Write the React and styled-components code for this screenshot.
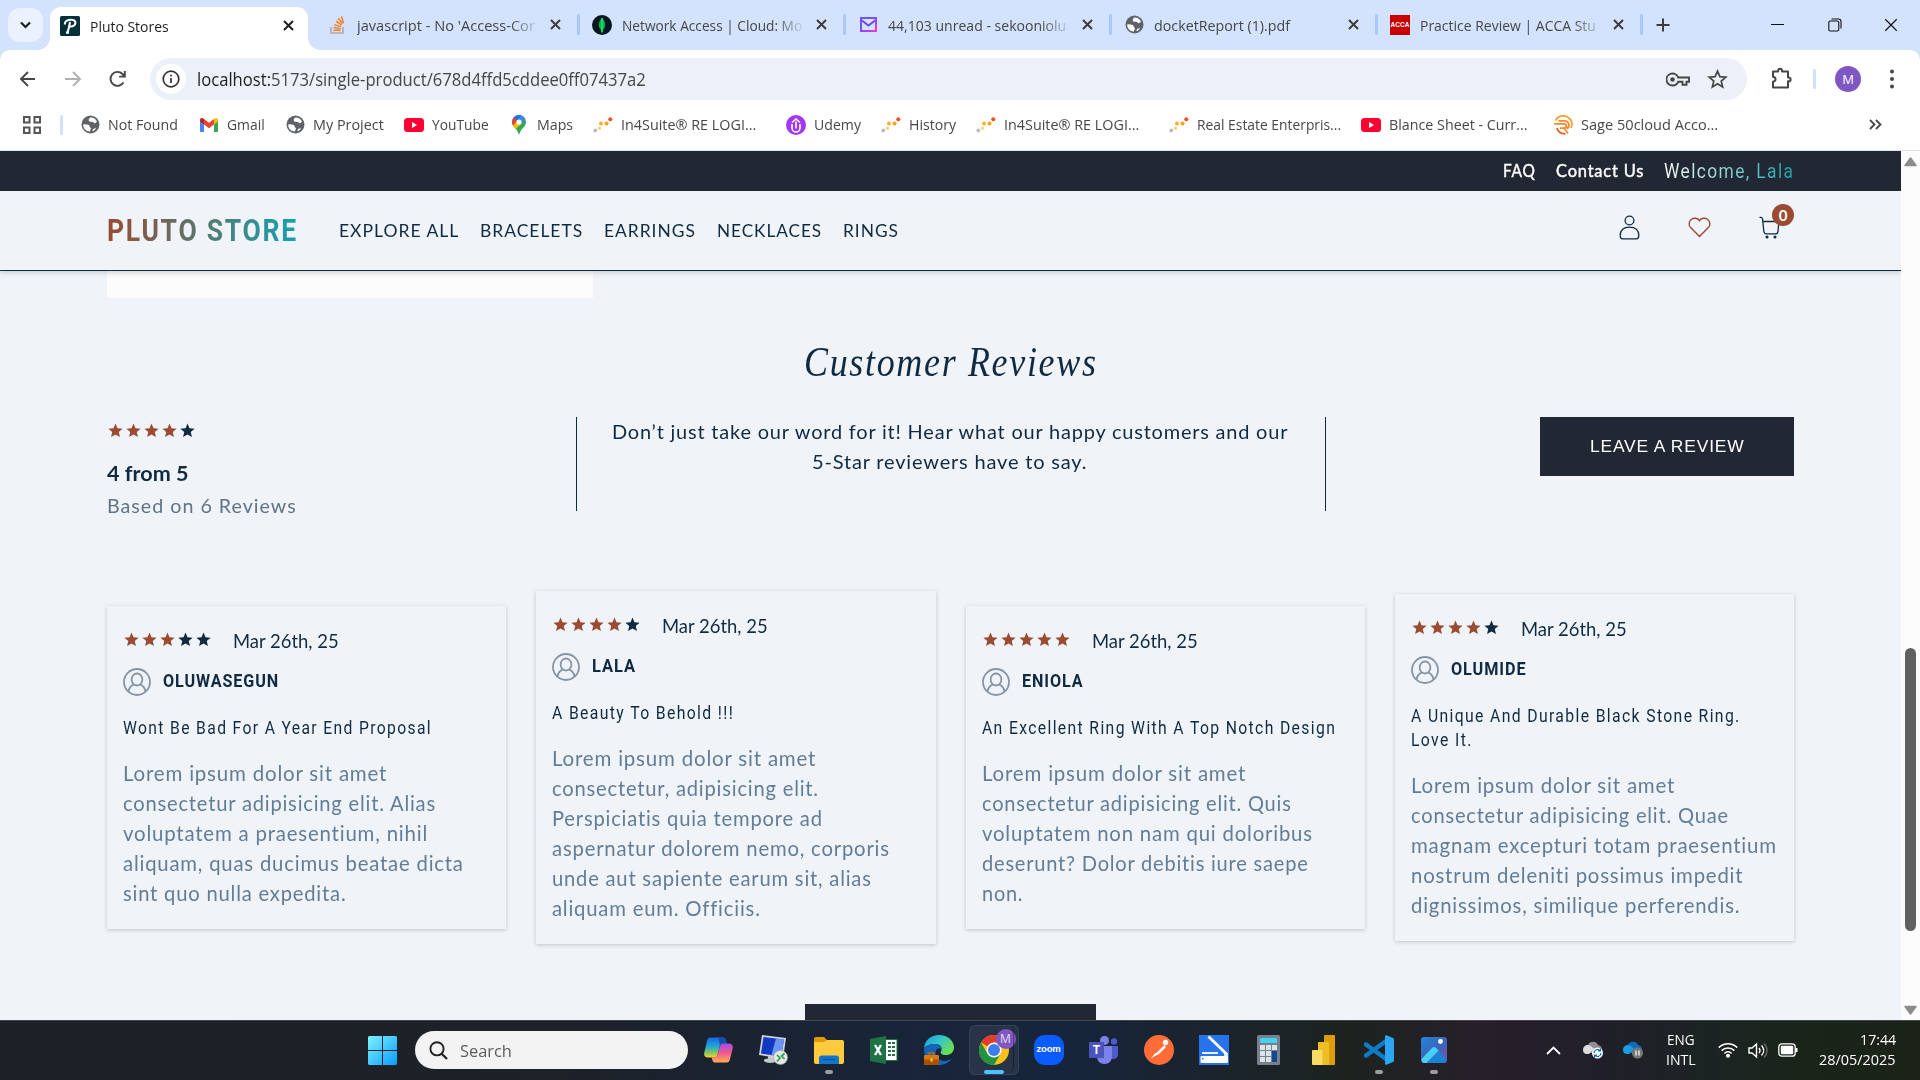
import React, { useLayoutEffect, useRef, useState } from "react";
import styled, { createGlobalStyle } from "styled-components";

const ui = `"Open Sans", "Noto Sans", sans-serif`;
const body = `Lato, "Open Sans", sans-serif`;
const cond = `Roboto, "Liberation Sans", sans-serif`;
const ink = "#102a42";
const rust = "#9a4b32";
const dark = "#212733";

const Global = createGlobalStyle`
  * { box-sizing: border-box; }
  body { margin: 0; overflow: hidden; background: #fff; }
  p, h1, h2, h3, h4 { margin: 0; font-weight: 400; }
  svg { display: block; flex: none; }
`;

/* ---------- text that keeps a given measure ---------- */
const Measure = styled.span`
  display: inline-block;
  flex: none;
  width: ${(p) => p.$w}px;
  white-space: nowrap;
  vertical-align: top;
`;
const Ink = styled.span`
  display: inline-block;
  transform-origin: 0 50%;
  ${(p) => p.$gradient && `background: ${p.$gradient}; -webkit-background-clip: text; background-clip: text; color: transparent;`}
`;
function Fit({ w, gradient, children }) {
  const ref = useRef(null);
  const [scale, setScale] = useState(1);
  useLayoutEffect(() => {
    const el = ref.current;
    const ls = parseFloat(getComputedStyle(el).letterSpacing) || 0;
    const natural = el.offsetWidth - ls;
    if (natural > 0) setScale(w / natural);
  }, [w]);
  return (
    <Measure $w={w}>
      <Ink ref={ref} $gradient={gradient} style={{ transform: `scaleX(${scale})` }}>
        {children}
      </Ink>
    </Measure>
  );
}

const Screen = styled.div`
  width: 1920px;
  height: 1080px;
  display: flex;
  flex-direction: column;
  overflow: hidden;
  font-family: ${ui};
`;

/* ---------- browser tabs ---------- */
const TabStrip = styled.div`
  height: 50px;
  flex: none;
  display: flex;
  background: #d3e2fd;
  padding-left: 8px;
`;
const TabSearch = styled.div`
  width: 35px;
  height: 34px;
  margin: 8px 7px 0 0;
  border-radius: 12px;
  background: #ebf1fd;
  display: grid;
  place-items: center;
`;
const ActiveTab = styled.div`
  width: 258px;
  height: 43px;
  margin: 7px 12px 0 0;
  background: #fff;
  border-radius: 11px 11px 0 0;
  display: flex;
  align-items: center;
  padding: 0 14px 6px 10px;
  position: relative;
  font-size: 15px;
  color: #1f1f1f;
  &::before, &::after {
    content: "";
    position: absolute;
    bottom: 0;
    width: 12px;
    height: 12px;
  }
  &::before { left: -12px; background: radial-gradient(circle at 0 0, transparent 11.5px, #fff 12px); }
  &::after { right: -12px; background: radial-gradient(circle at 100% 0, transparent 11.5px, #fff 12px); }
`;
const Tab = styled.div`
  width: ${(p) => p.$w}px;
  height: 50px;
  display: flex;
  align-items: center;
  padding: 0 18px 1px ${(p) => p.$pl}px;
  position: relative;
  font-size: 15px;
  color: #454746;
  &::after {
    content: "";
    position: absolute;
    right: -1px;
    top: 14px;
    width: 3px;
    height: 21px;
    border-radius: 2px;
    background: #a8c7fa;
  }
`;
const Favicon = styled.span`
  width: 20px;
  display: grid;
  place-items: center;
  flex: none;
`;
const TabTitle = styled.span`
  width: ${(p) => p.$w}px;
  margin-left: 10px;
  white-space: nowrap;
  line-height: 24px;
  ${(p) => p.$fade && "-webkit-mask-image: linear-gradient(90deg, #000 84%, transparent 101%);"}
`;
const Spring = styled.span`flex: 1;`;
const NewTab = styled.div`
  display: flex;
  align-items: center;
  margin-left: 14px;
`;
const WindowButtons = styled.div`
  margin-left: auto;
  width: 171px;
  display: flex;
  align-items: center;
  padding: 0 22px 0 21px;
  justify-content: space-between;
`;

/* ---------- toolbar ---------- */
const Toolbar = styled.div`
  height: 50px;
  flex: none;
  background: #d3e2fd;
`;
const ToolbarInner = styled.div`
  height: 50px;
  background: #fff;
  border-radius: 10px 10px 0 0;
  display: flex;
  align-items: center;
  padding: 8px 20px 0 17px;
`;
const NavButtons = styled.div`
  width: 133px;
  display: flex;
  gap: 24px;
`;
const Omnibox = styled.div`
  width: 1597px;
  height: 42px;
  border-radius: 21px;
  background: #ebf0f9;
  display: flex;
  align-items: center;
  padding: 0 19px 0 6px;
  font-size: 18px;
  color: #1f1f1f;
  line-height: 26px;
`;
const InfoDot = styled.span`
  width: 30px;
  height: 30px;
  border-radius: 50%;
  background: #fff;
  display: grid;
  place-items: center;
  margin-right: 11px;
`;
const Dim = styled.span`color: #474747;`;
const OmniIcons = styled.span`
  margin-left: auto;
  display: flex;
  align-items: center;
  gap: 17px;
`;
const ToolRight = styled.div`
  flex: 1;
  display: flex;
  align-items: center;
  padding: 0 0 1px 23px;
`;
const Divider = styled.span`
  width: 3px;
  height: 20px;
  margin: ${(p) => p.$m};
  border-radius: 2px;
  background: #d0e0fb;
`;
const Profile = styled.span`
  width: 26px;
  height: 26px;
  border-radius: 50%;
  background: #7e57c2;
  color: #fff;
  font-size: 13px;
  line-height: 26px;
  text-align: center;
  margin-right: 27px;
`;

/* ---------- bookmarks ---------- */
const Bookmarks = styled.div`
  height: 51px;
  flex: none;
  display: flex;
  align-items: center;
  padding: 0 38px 1px 23px;
  border-bottom: 1px solid #dfe3e3;
  font-size: 15px;
  color: #474747;
`;
const Bookmark = styled.div`
  width: ${(p) => p.$w}px;
  flex: none;
  display: flex;
  align-items: center;
  gap: 8px;
  line-height: 22px;
`;
const BookmarkName = styled.span`padding-bottom: 2px;`;

/* ---------- store page ---------- */
const Viewport = styled.div`
  height: 869px;
  flex: none;
  display: flex;
`;
const Page = styled.div`
  width: 1901px;
  background: #f0f4f8;
  display: flex;
  flex-direction: column;
  overflow: hidden;
  color: ${ink};
  font-family: ${body};
`;
const TopBar = styled.div`
  height: 40px;
  flex: none;
  background: ${dark};
  color: #fff;
  display: flex;
  justify-content: flex-end;
  align-items: center;
  gap: 21px;
  padding-right: 108px;
  font-size: 16.5px;
  line-height: 24px;
  letter-spacing: 0.8px;
`;
const TopLink = styled.span`
  padding-bottom: 1px;
  -webkit-text-stroke: 0.4px currentColor;
`;
const Welcome = styled.span`
  font-family: ${cond};
  font-size: 20px;
  letter-spacing: 1.6px;
`;
const Header = styled.header`
  height: 80px;
  flex: none;
  border-bottom: 1px solid ${ink};
  box-shadow: 0 2px 5px rgba(0, 0, 0, 0.16);
  display: flex;
  align-items: center;
  padding: 0 107px 0 107px;
  position: relative;
`;
const Logo = styled.h1`
  font: 700 31px/40px ${cond};
  letter-spacing: 2px;
  margin-right: 43px;
`;
const Menu = styled.nav`
  display: flex;
  gap: 22px;
  padding-bottom: 2px;
  font-size: 18px;
  line-height: 24px;
  letter-spacing: 1px;
`;
const Actions = styled.div`
  margin-left: auto;
  display: flex;
  align-items: center;
  padding: 0 13px 6px 0;
  gap: 48px;
`;
const Cart = styled.span`position: relative;`;
const CartCount = styled.span`
  position: absolute;
  left: 13px;
  top: -12px;
  width: 22px;
  height: 22px;
  border-radius: 50%;
  background: ${rust};
  color: #fff;
  font: 700 15px/22px ${body};
  text-align: center;
`;
const ProductEdge = styled.div`
  width: 486px;
  height: 27px;
  flex: none;
  margin-left: 107px;
  background: #fcfcfc;
`;
const Heading = styled.h2`
  margin-top: 36px;
  padding-left: 804px;
  height: 56px;
  font: italic 400 43px/56px "Liberation Serif", serif;
  letter-spacing: 2px;
`;
const Summary = styled.section`
  height: 94px;
  flex: none;
  margin: 27px 107px 0;
  display: flex;
  font-size: 20px;
  line-height: 30px;
`;
const Score = styled.div`
  width: 469px;
  padding-top: 3px;
`;
const ScoreStars = styled.div`
  height: 20px;
  padding-left: 1px;
  display: flex;
  align-items: center;
`;
const ScoreValue = styled.p`
  margin-top: 18px;
  font-weight: 700;
`;
const ScoreBase = styled.p`
  margin-top: 2px;
  color: #5f7489;
  letter-spacing: 1px;
`;
const Pitch = styled.div`
  width: 750px;
  height: 94px;
  margin-top: 0;
  border-left: 1px solid ${ink};
  border-right: 1px solid ${ink};
  display: flex;
  flex-direction: column;
  align-items: center;
  padding-right: 3px;
  line-height: 29.5px;
  letter-spacing: 0.8px;
`;
const DarkButton = styled.button`
  border: 0;
  background: ${dark};
  color: #fff;
  width: ${(p) => p.$w}px;
  height: 59px;
  flex: none;
  font: 400 17px/24px "Liberation Sans", sans-serif;
  letter-spacing: 0.8px;
  padding: 0 4px 0 0;
  margin-left: ${(p) => p.$ml}px;
`;
const Reviews = styled.section`
  height: 354px;
  flex: none;
  margin: 79px 107px 0;
  display: grid;
  grid-template-columns: repeat(4, 1fr);
  gap: 30px;
  align-items: center;
`;
const Card = styled.article`
  padding: 19px 16px 21px;
  box-shadow: 0 1px 4px rgba(0, 0, 0, 0.2);
`;
const CardTop = styled.div`
  height: 30px;
  display: flex;
  align-items: center;
  padding-left: 1px;
  font-size: 20px;
  line-height: 30px;
`;
const CardDate = styled.span`margin-left: 22px;`;
const CardUser = styled.div`
  margin-top: 13px;
  height: 28px;
  display: flex;
  align-items: center;
  gap: 12px;
  font: 700 18px/26px ${cond};
  letter-spacing: 1px;
`;
const UserName = styled.span`padding-bottom: 2px;`;
const CardTitle = styled.h3`
  margin-top: 20px;
  display: flex;
  flex-direction: column;
  font: 400 18.5px/24px ${cond};
  letter-spacing: 1.6px;
`;
const CardText = styled.p`
  margin-top: 18px;
  display: flex;
  flex-direction: column;
  font-size: 20.5px;
  line-height: 30px;
  letter-spacing: 0.8px;
  color: #627d98;
`;
const StarRow = styled.span`
  display: flex;
  gap: 3px;
`;
const MoreButton = styled.div`
  width: 291px;
  height: 59px;
  flex: none;
  margin: 60px 0 0 805px;
  background: ${dark};
`;
const ScrollTrack = styled.div`
  width: 19px;
  background: #fcfcfc;
  display: flex;
  flex-direction: column;
  align-items: center;
  padding: 6px 0 5px;
`;
const ScrollThumb = styled.div`
  width: 11px;
  height: 283px;
  margin: 481px 0 74px;
  border-radius: 6px;
  background: #606060;
`;

/* ---------- taskbar ---------- */
const Taskbar = styled.div`
  height: 60px;
  flex: none;
  border-top: 1px solid #44484b;
  display: flex;
  align-items: center;
  padding: 0 0 1px 368px;
  background: linear-gradient(90deg, #1c2128 0, #1d2128 560px, #192438 880px, #16253b 1060px, #1b232c 1220px, #1c231f 1350px, #271f2a 1480px, #211f2a 1590px, #1b2422 1720px, #1b2419 1800px, #1b2319 100%);
`;
const SearchBox = styled.div`
  width: 273px;
  height: 38px;
  margin: 0 3px 0 18px;
  border-radius: 19px;
  background: #f3f3f3;
  display: flex;
  align-items: center;
  gap: 12px;
  padding-left: 14px;
  font-size: 17px;
  color: #5c5c5c;
`;
const AppSlot = styled.div`
  width: 55px;
  height: 50px;
  display: grid;
  place-items: center;
  position: relative;
`;
const ActiveApp = styled.div`
  width: 50px;
  height: 50px;
  border-radius: 6px;
  background: rgba(255, 255, 255, 0.07);
  border: 1px solid rgba(255, 255, 255, 0.08);
  display: grid;
  place-items: center;
  position: relative;
  &::after {
    content: "";
    position: absolute;
    top: -1px;
    right: 4px;
    width: 6px;
    height: 48px;
    border-right: 1px solid rgba(0, 0, 0, 0.35);
    border-radius: 0 6px 6px 0;
  }
`;
const Running = styled.span`
  position: absolute;
  left: 50%;
  bottom: ${(p) => (p.$on ? 0 : 1)}px;
  width: ${(p) => (p.$on ? 20 : 8)}px;
  height: 4px;
  margin-left: ${(p) => (p.$on ? -10 : -4)}px;
  border-radius: 2px;
  background: ${(p) => (p.$on ? "#4cc2ff" : "#9c9da0")};
`;
const AppBadge = styled.span`
  position: absolute;
  right: 2px;
  top: 3px;
  width: 20px;
  height: 20px;
  border-radius: 50%;
  background: #7e57c2;
  color: #e7def5;
  font: 400 12px/20px ${ui};
  text-align: center;
`;
const Tray = styled.div`
  margin-left: auto;
  width: 374px;
  height: 59px;
  display: flex;
  align-items: center;
  padding-right: 24px;
  color: #fff;
  font-size: 15px;
  line-height: 20px;
`;
const TrayItem = styled.span`margin-left: ${(p) => p.$ml}px;`;
const TrayText = styled.span`
  margin-left: ${(p) => p.$ml}px;
  display: flex;
  flex-direction: column;
  align-items: ${(p) => p.$align};
  padding-bottom: 2px;
`;

/* ---------- drawings ---------- */
const CloseX = ({ s = 11, w = 2, c = "#3c3c3c" }) => (
  <svg width={s} height={s} viewBox="0 0 11 11">
    <path d="M1 1l9 9M10 1l-9 9" stroke={c} strokeWidth={w} />
  </svg>
);
const Globe = () => (
  <svg width="19" height="19" viewBox="0 0 19 19">
    <circle cx="9.500" cy="9.500" r="9" fill="#5f6368" />
    <path d="M9 2.500c3-.6 6 1.200 7 4.200-1 .2-1 1.400-2.200 1.500-1.400 0-1-1.500-2.600-1.500H9.500c-1 0-1.800-.8-1.800-1.800S8.500 3.700 9 2.500zM2.200 9.300l3.600.2c1.600.1 2.600.6 2.800 2 .1 1 1.300.8 1.300 2 0 1.200-.8 1.200-.9 3C5 16.500 2 13.500 2.200 9.300zM11.500 16.300c.3-1.600.5-2.600 1.800-2.700 1 0 1.500-.5 2-1.400-.5 2-2 3.500-3.800 4.100z" fill="#fff" />
  </svg>
);
const PlutoIcon = () => (
  <svg width="20" height="20" viewBox="0 0 20 20">
    <rect width="20" height="20" rx="1.500" fill="#04303a" />
    <path d="M4.800 8.500C4.500 5 7.500 3.800 11 3.800c3 0 4.500 1.200 4.400 3.100-.1 2.500-2.500 3.900-5.200 3.500M10 6c-.6 3-1 6.500-2.400 10.200M6 16.600h3" fill="none" stroke="#fff" strokeWidth="2.100" />
  </svg>
);
const StackIcon = () => (
  <svg width="15" height="18" viewBox="0 0 15 18">
    <path d="M1 11v6h12v-6" fill="none" stroke="#b3aba5" strokeWidth="1.600" />
    <path d="M3.500 14.300h7M3.600 11.600l7 .8M4.300 8.600l6.600 2M6 5.200l5.700 3.900M8.300 2.300l4.300 5.500M11.500.5l2 6.500" stroke="#f48024" strokeWidth="1.500" />
  </svg>
);
const MongoIcon = () => (
  <svg width="20" height="20" viewBox="0 0 20 20">
    <circle cx="10" cy="10" r="10" fill="#061621" />
    <path d="M10 3c2.400 2.600 3.200 4.700 3.200 7S11.800 14.300 10 15.500C8.200 14.300 6.800 12.300 6.800 10S7.600 5.600 10 3z" fill="#13aa52" />
    <path d="M10 3v14.500" stroke="#00ed64" strokeWidth="1.800" />
  </svg>
);
const MailIcon = () => (
  <svg width="17" height="15" viewBox="0 0 17 15">
    <defs><linearGradient id="ml" x2="1" y2="1"><stop stopColor="#5b4bf5" /><stop offset=".5" stopColor="#7c3cf0" /><stop offset="1" stopColor="#f023e0" /></linearGradient></defs>
    <rect x="1" y="1" width="15" height="13" fill="none" stroke="url(#ml)" strokeWidth="1.800" />
    <path d="M2 3.500l6.500 5 6.500-5" fill="none" stroke="#7440f2" strokeWidth="1.800" />
  </svg>
);
const AccaBox = styled.span`
  width: 20px;
  height: 20px;
  background: #c80000;
  color: #fff;
  font: 700 6.5px/20px "Liberation Sans", sans-serif;
  text-align: center;
`;
const GmailIcon = () => (
  <svg width="18" height="14" viewBox="0 0 18 14">
    <path d="M0 2.500V13c0 .6.400 1 1 1h3V5.500z" fill="#4285f4" />
    <path d="M18 2.500V13c0 .6-.4 1-1 1h-3V5.500z" fill="#34a853" />
    <path d="M14 1v5.500l4-3V2c0-1.900-2-2.500-3.200-1.600z" fill="#fbbc04" />
    <path d="M0 2v1.500l4 3V1L3.200.4C2 -.5 0 .1 0 2z" fill="#c5221f" />
    <path d="M4 1l5 3.800L14 1v5.500l-5 3.800-5-3.800z" fill="#ea4335" />
  </svg>
);
const YoutubeIcon = () => (
  <svg width="20" height="14" viewBox="0 0 20 14"><rect width="20" height="14" rx="3.500" fill="#ff0033" /><path d="M8 4l5 3-5 3z" fill="#fff" /></svg>
);
const MapsIcon = () => (
  <svg width="14" height="20" viewBox="0 0 14 20">
    <path d="M7 20c-.8-2.500-1.500-4.300-3.500-6.500C1.500 11.300 0 9.800 0 7a7 7 0 0114 0c0 2.800-1.500 4.300-3.500 6.500C8.500 15.700 7.800 17.500 7 20z" fill="#34a853" />
    <path d="M1.600 2.600l3.800 3.100L1.200 10.600C.4 9.500 0 8.500 0 7c0-1.700.6-3.200 1.600-4.400z" fill="#ea4335" />
    <path d="M1.600 2.600C3.600.2 6.600-.5 9.200.4L5.400 5.700z" fill="#1a73e8" /><path d="M9.200.4c2 .7 3.400 2 4.200 3.800L8.600 9.500 5.400 5.700z" fill="#4285f4" />
    <path d="M1.200 10.600l4.200-4.900 3.300 3.700-5 4.300C2.700 12.600 1.800 11.600 1.200 10.600z" fill="#fbbc04" />
    <circle cx="7" cy="7" r="2.600" fill="#fff" />
  </svg>
);
const DotsIcon = () => (
  <svg width="20" height="16" viewBox="0 0 20 16">
    <circle cx="2.300" cy="13.500" r="1.900" fill="#b9bdc9" /><circle cx="6.500" cy="11.200" r="1.800" fill="#f9d976" />
    <circle cx="8" cy="6.500" r="1.900" fill="#fbb01c" /><circle cx="13.500" cy="6.500" r="2" fill="#f9a11b" /><circle cx="17.300" cy="2.200" r="2" fill="#f1531d" />
  </svg>
);
const UdemyIcon = () => (
  <svg width="20" height="20" viewBox="0 0 20 20">
    <circle cx="10" cy="10" r="10" fill="#a435f0" />
    <path d="M6 9v4a4 4 0 008 0V9M10 13.500V6.500M6 7.500L10 4l4 3.500" fill="none" stroke="#fff" strokeWidth="1.600" />
  </svg>
);
const SageIcon = () => (
  <svg width="20" height="20" viewBox="0 0 20 20" fill="none" strokeWidth="1.800">
    <path d="M2.500 5.500C4.500 1 10-.5 14.500 2c4.500 2.500 5.500 7.500 3.500 11" stroke="#f7a13a" />
    <path d="M1 8.800h10c3 0 3 4.400 0 4.400H7M11 13.200l4 5M5.500 5.800h5.700c5.300 0 6 6.200 2.600 8" stroke="#f58a2c" />
    <path d="M4 13c1 3.800 4 6 8.500 5.800" stroke="#ee5f24" />
  </svg>
);
const Star = ({ on }) => (
  <svg width="15" height="15" viewBox="0 0 24 24"><path d="M12 .8l3.200 7.600 8.200.7-6.200 5.400 1.900 8L12 18.200l-7.100 4.300 1.900-8L.6 9.100l8.200-.7z" fill={on ? rust : ink} /></svg>
);
const Stars = ({ n }) => <StarRow>{[1, 2, 3, 4, 5].map((i) => <Star key={i} on={i <= n} />)}</StarRow>;
const Avatar = () => (
  <svg width="28" height="28" viewBox="0 0 28 28" fill="none" stroke="#8595a6" strokeWidth="1.800">
    <circle cx="14" cy="14" r="13" /><ellipse cx="14" cy="11.500" rx="5.400" ry="6" /><path d="M5.500 23.500c.6-3.800 2.600-6 5.400-6.900M22.500 23.500c-.6-3.800-2.600-6-5.400-6.900" />
  </svg>
);

const tabs = [
  { i: <StackIcon />, t: "javascript - No 'Access-Cor", w: 178, slot: 259, f: 1, pl: 7 },
  { i: <MongoIcon />, t: "Network Access | Cloud: Mo", w: 180, slot: 266, f: 1, pl: 13 },
  { i: <MailIcon />, t: "44,103 unread - sekooniolu", w: 178, slot: 266, f: 1, pl: 13 },
  { i: <Globe />, t: "docketReport (1).pdf", w: 136, slot: 266, pl: 13 },
  { i: <AccaBox>ACCA</AccaBox>, t: "Practice Review | ACCA Stu", w: 176, slot: 265, f: 1, pl: 13 },
];
const marks = [
  [<Globe />, "Not Found", 70, 119], [<GmailIcon />, "Gmail", 38, 86], [<Globe />, "My Project", 71, 119],
  [<YoutubeIcon />, "YouTube", 57, 105], [<MapsIcon />, "Maps", 36, 84], [<DotsIcon />, "In4Suite® RE LOGI...", 135, 193],
  [<UdemyIcon />, "Udemy", 47, 95], [<DotsIcon />, "History", 47, 95], [<DotsIcon />, "In4Suite® RE LOGI...", 135, 193],
  [<DotsIcon />, "Real Estate Enterpris...", 144, 192], [<YoutubeIcon />, "Blance Sheet - Curr...", 138, 192], [<SageIcon />, "Sage 50cloud Acco...", 137, 180],
];
const reviews = [
  { n: 3, name: ["OLUWASEGUN", 115], title: [["Wont Be Bad For A Year End Proposal", 308]], text: [["Lorem ipsum dolor sit amet", 263], ["consectetur adipisicing elit. Alias", 312], ["voluptatem a praesentium, nihil", 304], ["aliquam, quas ducimus beatae dicta", 340], ["sint quo nulla expedita.", 223]] },
  { n: 4, name: ["LALA", 43], title: [["A Beauty To Behold !!!", 181]], text: [["Lorem ipsum dolor sit amet", 263], ["consectetur, adipisicing elit.", 266], ["Perspiciatis quia tempore ad", 270], ["aspernatur dolorem nemo, corporis", 337], ["unde aut sapiente earum sit, alias", 319], ["aliquam eum. Officiis.", 208]] },
  { n: 5, name: ["ENIOLA", 61], title: [["An Excellent Ring With A Top Notch Design", 353]], text: [["Lorem ipsum dolor sit amet", 263], ["consectetur adipisicing elit. Quis", 309], ["voluptatem non nam qui doloribus", 330], ["deserunt? Dolor debitis iure saepe", 326], ["non.", 41]] },
  { n: 4, name: ["OLUMIDE", 75], title: [["A Unique And Durable Black Stone Ring.", 328], ["Love It.", 60]], text: [["Lorem ipsum dolor sit amet", 263], ["consectetur adipisicing elit. Quae", 317], ["magnam excepturi totam praesentium", 365], ["nostrum deleniti possimus impedit", 332], ["dignissimos, similique perferendis.", 329]] },
];

/* ---------- taskbar drawings ---------- */
const WinLogo = () => (
  <svg width="29" height="29" viewBox="0 0 29 29">
    <defs><linearGradient id="wl" x2="1" y2="1"><stop stopColor="#7cf3ff" /><stop offset="1" stopColor="#0a9bff" /></linearGradient></defs>
    <path d="M1 0h13v14H0V1zM15 0h13l1 1v13H15zM0 15h14v14H1l-1-1zM15 15h14v13l-1 1H15z" fill="url(#wl)" />
  </svg>
);
const Copilot = () => (
  <svg width="29" height="26" viewBox="0 0 29 26">
    <defs>
      <linearGradient id="c1" x2="0" y2="1"><stop stopColor="#1767e0" /><stop offset=".45" stopColor="#23a5d8" /><stop offset=".75" stopColor="#7cc95a" /><stop offset="1" stopColor="#ffd02f" /></linearGradient>
      <linearGradient id="c2" x2="0" y2="1"><stop stopColor="#a04de8" /><stop offset=".5" stopColor="#f2588c" /><stop offset="1" stopColor="#ffb054" /></linearGradient>
    </defs>
    <path d="M6 .5h13c2 0 2.500 1.500 3.200 4l.7 2.500h-4c-2 0-2.700 1-3.300 3l-2.300 8c-.7 2-1.500 2.500-3 2.500H4C.8 20.500-.3 18.500.3 15.500L3 4C3.600 1.500 4.500.5 6 .5z" fill="url(#c1)" />
    <path d="M16 .5h3c2 0 2.500 1.500 3.200 4l.7 2.500h-4c-1.500 0-2.400.6-3 2C15.400 6 15 2 14 .5z" fill="#1450b4" />
    <path d="M23 25.500H11c-1.500 0-2.300-1-2.800-3L7.500 20c3 1 5.200.3 6-2.500l2.600-8.500c.6-1.700 1.400-2.500 3-2.500H25c3.200 0 4.200 2 3.700 5L26 22c-.6 2.500-1.500 3.500-3 3.500z" fill="url(#c2)" />
  </svg>
);
const RemotePC = () => (
  <svg width="29" height="30" viewBox="0 0 29 30">
    <path d="M9 21l7 1v4c3 2-9 3-11 0-.5-1.500 1-2.500 4-2.500z" fill="#c6c8cc" />
    <path d="M3 0l24 3-3 21L0 20z" fill="#d0d3d9" /><path d="M4.500 2l20.500 2.600-2.600 17L2 18.500z" fill="#1239c4" /><path d="M17 3.600l8 1-2.600 17-10-1.400z" fill="#6c95f2" />
    <circle cx="21.500" cy="22.500" r="7" fill="#e6e8e8" stroke="#aaa" strokeWidth=".6" /><path d="M18 20l3 3-3 3.500M25.500 18.500L22.500 21l3 3" fill="none" stroke="#2ea043" strokeWidth="1.700" />
  </svg>
);
const Folder = () => (
  <svg width="30" height="27" viewBox="0 0 30 27">
    <path d="M0 2c0-1 .6-2 2-2h8l3 3h15v8H0z" fill="#e09b09" /><path d="M0 5h10l3-2h15c1.500 0 2 .7 2 2v20c0 1-.8 2-2 2H2c-1.300 0-2-1-2-2z" fill="#ffcb3d" />
    <path d="M5 27v-6c0-1.500 1-2.500 2.500-2.500h15c1.500 0 2.500 1 2.500 2.500v6z" fill="#1176cc" /><path d="M9 22.500h12" stroke="#084f95" strokeWidth="1.200" />
  </svg>
);
const Excel = () => (
  <svg width="28" height="28" viewBox="0 0 28 28">
    <rect x="14" y="3.500" width="13" height="21" fill="#fff" stroke="#1f7244" /><path d="M18 7h7M18 11h7M18 15h7M18 19h7" stroke="#1f7244" strokeWidth="2.200" strokeDasharray="3 1" />
    <path d="M0 3l16-3v28L0 25z" fill="#1f7244" /><path d="M5 9l6 10M11 9L5 19" stroke="#fff" strokeWidth="2.400" />
  </svg>
);
const Edge = () => (
  <svg width="30" height="30" viewBox="0 0 30 30">
    <defs><linearGradient id="eg" x2="1" y2=".6"><stop stopColor="#1a9be0" /><stop offset=".5" stopColor="#33c4cc" /><stop offset="1" stopColor="#6be04f" /></linearGradient></defs>
    <path d="M0 13C1 5 7 0 15 0c9 0 15 6 15 12.500 0 5-4 7.500-8 7.500-4 0-6-1.500-5-3.500 2-4-1-7.500-6-7.500C6 9 2 11 0 13z" fill="url(#eg)" />
    <path d="M0 14c2-3.500 6-5 10-5 4 0 7 2 7.500 5-3-2-6 0-6 4 0 6 6 9 12 7.500 2-.5 3-1 4.500-2C25 28 20 30 15 30 6 30 0 23 0 14z" fill="#1565b8" />
    <rect y="20" width="15" height="10" rx="1" fill="#d97a0d" /><rect y="24.500" width="15" height="5.500" fill="#a85200" /><path d="M5 20v-2h5v2" fill="none" stroke="#c96a05" strokeWidth="1.300" /><rect x="6.500" y="23.500" width="2" height="3" fill="#ffd34d" />
  </svg>
);
const Chrome = () => (
  <svg width="30" height="30" viewBox="0 0 30 30">
    <circle cx="15" cy="15" r="15" fill="#fbc116" /><path d="M15 15L2 7.500A15 15 0 0128 7.500H15z" fill="#e33b2e" />
    <path d="M2 7.500A15 15 0 0015 30l6.500-11.200L15 15 8.500 18.700z" fill="#229342" /><circle cx="15" cy="15" r="7.500" fill="#fff" /><circle cx="15" cy="15" r="6" fill="#3b7ded" />
  </svg>
);
const ZoomTile = styled.span`
  width: 30px;
  height: 30px;
  border-radius: 11px;
  background: #0b5cff;
  color: #fff;
  font: 700 9.5px/28px "Liberation Sans", sans-serif;
  text-align: center;
  letter-spacing: -0.2px;
`;
const TeamsArt = styled.span`
  display: grid;
  > * { grid-area: 1 / 1; }
`;
const TeamsT = styled.span`
  width: 15px;
  height: 16px;
  margin-top: 6px;
  background: #4b53bc;
  color: #fff;
  font: 700 12px/16px "Liberation Sans", sans-serif;
  text-align: center;
`;
const Teams = () => (
  <TeamsArt>
    <svg width="29" height="28" viewBox="0 0 29 28">
      <circle cx="15.500" cy="4.500" r="4.500" fill="#7b83eb" /><circle cx="25" cy="5.500" r="3.200" fill="#5059c9" />
      <path d="M20 10h9v8c0 3-2 5-5 5s-4-2-4-4z" fill="#5059c9" /><path d="M8 10h15v10c0 5-3 8-7.500 8S8 25 8 20z" fill="#7b83eb" />
    </svg>
    <TeamsT>T</TeamsT>
  </TeamsArt>
);
const Postman = () => (
  <svg width="30" height="30" viewBox="0 0 30 30">
    <circle cx="15" cy="15" r="15" fill="#ff6c37" /><circle cx="21.500" cy="7.500" r="2.700" fill="#fff" />
    <path d="M20 10l2 2-7 7-4 2-4 2.500 3-4z" fill="#fff" /><path d="M20 10l-8 8" stroke="#ff6c37" strokeWidth=".8" />
  </svg>
);
const Scanner = () => (
  <svg width="30" height="30" viewBox="0 0 30 30">
    <rect width="30" height="30" fill="#2673ec" /><path d="M9.500 1.500L28 19.500" stroke="#fff" strokeWidth="2.800" /><path d="M3 18h16" stroke="#fff" strokeWidth="1.800" />
    <rect x="1.500" y="21" width="27.500" height="7" rx="1" fill="#fff" /><path d="M27 18v5" stroke="#fff" strokeWidth="3.500" /><rect x="3" y="23" width="1.500" height="1.500" fill="#2673ec" />
  </svg>
);
const Calc = () => (
  <svg width="23" height="30" viewBox="0 0 23 30">
    <rect width="23" height="30" rx="1.500" fill="#76818c" /><rect x="3" y="3" width="17" height="5" fill="#46d0f4" />
    {[10, 16, 22].map((y) => [3, 9, 15].map((x) => <rect key={`${x}-${y}`} x={x} y={y} width="5" height="5" fill={x === 15 && y > 10 ? "#0e4a92" : "#dbe2e8"} />))}
    <rect x="15" y="16" width="5" height="11" fill="#0e4a92" />
  </svg>
);
const PowerBI = () => (
  <svg width="23" height="30" viewBox="0 0 23 30"><rect x="12" width="11" height="30" rx="1" fill="#dc9c0c" /><rect x="6" y="7" width="11" height="23" rx="1" fill="#edbf25" /><rect y="15" width="10.500" height="15" rx="1" fill="#f8dc63" /></svg>
);
const VsCode = () => (
  <svg width="30" height="30" viewBox="0 0 30 30">
    <path d="M2 9.500L22 24M2 20.500L22 6" stroke="#0f7ac6" strokeWidth="4.500" strokeLinecap="round" />
    <path d="M22 0l7 3c.6.300 1 .8 1 1.500v21c0 .7-.4 1.200-1 1.500l-7 3-1-1V1z" fill="#2ba6f0" />
  </svg>
);
const Photos = () => (
  <svg width="26" height="26" viewBox="0 0 26 26">
    <defs><linearGradient id="ph" x2="1" y2="1"><stop stopColor="#2086dc" /><stop offset=".55" stopColor="#3d63b8" /><stop offset="1" stopColor="#8a4fb0" /></linearGradient></defs>
    <rect width="26" height="26" rx="3" fill="url(#ph)" /><circle cx="19.500" cy="4.500" r="2.400" fill="#fff" />
    <path d="M.5 22L11 11c1.200-1.200 2.800-1.200 4 0l10.500 11c0 2.500-1 4-3 4h-19C1.500 26 .5 24.500.5 22z" fill="#1c83d4" />
    <path d="M.5 22L11 11c1.200-1.200 2.800-1.200 4 0l2.500 2.600L5.500 26h-2C1.500 26 .5 24.500.5 22z" fill="#4ccdf2" />
  </svg>
);
const Cloud = ({ a, b, children }) => (
  <svg width="20" height="18" viewBox="0 0 20 18">
    <path d="M5 4a5.500 5.500 0 0110 0 5 5 0 013 8H6z" fill={a} /><path d="M0 9c0-3 2-5 5-5 2 0 3 1 6 4l-5 5H4c-2.500 0-4-1.500-4-4z" fill={b} />{children}
  </svg>
);

export default function App() {
  return (
    <Screen>
      <Global />
      <TabStrip>
        <TabSearch>
          <svg width="11" height="8" viewBox="0 0 11 8"><path d="M1 1.500l4.500 4.500L10 1.500" fill="none" stroke="#1f1f1f" strokeWidth="2.200" /></svg>
        </TabSearch>
        <ActiveTab>
          <Favicon><PlutoIcon /></Favicon>
          <TabTitle $w={100}><Fit w={79}>Pluto Stores</Fit></TabTitle>
          <Spring />
          <CloseX c="#1f1f1f" />
        </ActiveTab>
        {tabs.map((t) => (
          <Tab key={t.t} $w={t.slot} $pl={t.pl}>
            <Favicon>{t.i}</Favicon>
            <TabTitle $w={182} $fade={t.f}><Fit w={t.w}>{t.t}</Fit></TabTitle>
            <Spring />
            <CloseX />
          </Tab>
        ))}
        <NewTab>
          <svg width="14" height="14" viewBox="0 0 14 14"><path d="M7 .5v13M.5 7h13" stroke="#3c3c3c" strokeWidth="2" /></svg>
        </NewTab>
        <WindowButtons>
          <svg width="15" height="14" viewBox="0 0 15 14"><path d="M1 6.500h13" stroke="#111" /></svg>
          <svg width="14" height="14" viewBox="0 0 14 14" fill="none" stroke="#111" strokeWidth="1.100"><rect x=".8" y="3" width="10" height="10" rx="1.500" /><path d="M3.500 1h7c1.500 0 2.500 1 2.500 2.500v7" /></svg>
          <CloseX s={14} w={0.9} c="#111" />
        </WindowButtons>
      </TabStrip>

      <Toolbar>
        <ToolbarInner>
          <NavButtons>
            {["#454746", "#b0b1b1"].map((c, i) => (
              <svg key={c} width="21" height="20" viewBox="0 0 21 20"><path d={i ? "M3 10h15M11 3l7 7-7 7" : "M18 10H4M11 3l-7 7 7 7"} fill="none" stroke={c} strokeWidth="1.900" /></svg>
            ))}
            <svg width="21" height="20" viewBox="0 0 21 20"><path d="M16.500 13.500A7 7 0 1115.500 5l2 2.200M17.800 2v5.600h-5.600" fill="none" stroke="#454746" strokeWidth="1.900" /></svg>
          </NavButtons>
          <Omnibox>
            <InfoDot>
              <svg width="18" height="18" viewBox="0 0 18 18"><circle cx="9" cy="9" r="7.800" fill="none" stroke="#333" strokeWidth="1.700" /><path d="M9 8v5M9 4.800v1.800" stroke="#333" strokeWidth="1.700" /></svg>
            </InfoDot>
            <Fit w={449}>localhost:<Dim>5173/single-product/678d4ffd5cddee0ff07437a2</Dim></Fit>
            <OmniIcons>
              <svg width="24" height="15" viewBox="0 0 24 15"><path d="M12.200 5.500A6 6 0 106.500 13.500a6 6 0 005.700-3.800h4.300v3h4v-3H23V5.500z" fill="none" stroke="#454746" strokeWidth="1.900" /><circle cx="6.500" cy="7.500" r="2.300" fill="#454746" /></svg>
              <svg width="21" height="20" viewBox="0 0 24 23"><path d="M12 2.500l2.700 6.300 6.800.6-5.200 4.500 1.600 6.700-5.900-3.600-5.900 3.600 1.600-6.700L2.500 9.400l6.800-.6z" fill="none" stroke="#454746" strokeWidth="2" /></svg>
            </OmniIcons>
          </Omnibox>
          <ToolRight>
            <svg width="23" height="23" viewBox="0 0 23 23"><path d="M3 4.500h5.200V3.600a1.900 1.900 0 013.800 0v.9H18v6h.7a1.900 1.900 0 010 3.800H18v6.200H3v-5.700c3.400-.5 3.400-4.500 0-5z" fill="none" stroke="#454746" strokeWidth="2" strokeLinejoin="round" /></svg>
            <Divider $m="0 19px 0 20px" />
            <Profile>M</Profile>
            <svg width="8" height="20" viewBox="0 0 8 20" fill="#454746"><circle cx="4" cy="2.500" r="2" /><circle cx="4" cy="10" r="2" /><circle cx="4" cy="17.500" r="2" /></svg>
          </ToolRight>
        </ToolbarInner>
      </Toolbar>

      <Bookmarks>
        <svg width="18" height="18" viewBox="0 0 18 18" fill="none" stroke="#555" strokeWidth="2"><path d="M1 1h5.500v5.500H1zM11.500 1H17v5.500h-5.500zM1 11.500h5.500V17H1zM11.500 11.500H17V17h-5.500z" /></svg>
        <Divider $m="0 17px 0 19px" />
        {marks.map(([ic, t, w, slot], i) => (
          <Bookmark key={i} $w={slot}><Favicon>{ic}</Favicon><BookmarkName><Fit w={w}>{t}</Fit></BookmarkName></Bookmark>
        ))}
        <Spring />
        <svg width="13" height="11" viewBox="0 0 13 11"><path d="M1 1l4.500 4.500L1 10M7 1l4.500 4.500L7 10" fill="none" stroke="#454746" strokeWidth="1.800" /></svg>
      </Bookmarks>

      <Viewport>
        <Page>
          <TopBar>
            <TopLink><Fit w={32}>FAQ</Fit></TopLink>
            <TopLink><Fit w={87}>Contact Us</Fit></TopLink>
            <Welcome><Fit w={129} gradient="linear-gradient(90deg, #fff, #14a3a8)">Welcome, Lala</Fit></Welcome>
          </TopBar>
          <Header>
            <Logo><Fit w={189} gradient="linear-gradient(90deg, #9a4b32, #14a3b0)">PLUTO STORE</Fit></Logo>
            <Menu>
              <Fit w={119}>EXPLORE ALL</Fit><Fit w={102}>BRACELETS</Fit><Fit w={91}>EARRINGS</Fit><Fit w={104}>NECKLACES</Fit><Fit w={55}>RINGS</Fit>
            </Menu>
            <Actions>
              <svg width="21" height="25" viewBox="0 0 21 25" fill="none" stroke={ink} strokeWidth="1.300"><circle cx="10.500" cy="5.500" r="4.400" /><path d="M1.200 20.500c0-5.400 3.500-8.300 9.300-8.300s9.300 2.900 9.300 8.300c0 2.200-.8 3.300-2.500 3.300H3.700c-1.700 0-2.500-1.100-2.500-3.300z" /></svg>
              <svg width="23" height="21" viewBox="0 0 23 21" fill="none" stroke={rust} strokeWidth="1.400"><path d="M11.500 19.500L2.600 10.600C.3 8.200.8 4.300 3.500 2.300 6 .5 9.800 1 11.500 3.600c1.700-2.600 5.500-3.100 8-1.300 2.700 2 3.200 5.900.9 8.300z" /></svg>
              <Cart>
                <svg width="22" height="23" viewBox="0 0 22 23" fill="none" stroke={ink} strokeWidth="1.300"><path d="M.5 1.300h1.300c1 0 1.600.5 1.700 1.500l1.300 12.500c.2 1.700 1 2.500 2.500 2.500h9.200c1.500 0 2.300-.8 2.500-2.500l.9-9.800H3.800" /><circle cx="8" cy="21" r=".9" fill={ink} /><circle cx="16" cy="21" r=".9" fill={ink} /></svg>
                <CartCount>0</CartCount>
              </Cart>
            </Actions>
          </Header>
          <ProductEdge />
          <Heading><Fit w={292}>Customer Reviews</Fit></Heading>
          <Summary>
            <Score>
              <ScoreStars><Stars n={4} /></ScoreStars>
              <ScoreValue><Fit w={82}>4 from 5</Fit></ScoreValue>
              <ScoreBase><Fit w={189}>Based on 6 Reviews</Fit></ScoreBase>
            </Score>
            <Pitch>
              <Fit w={675}>Don’t just take our word for it! Hear what our happy customers and our</Fit>
              <Fit w={275}>5-Star reviewers have to say.</Fit>
            </Pitch>
            <DarkButton $w={254} $ml={214}><Fit w={154}>LEAVE A REVIEW</Fit></DarkButton>
          </Summary>
          <Reviews>
            {reviews.map((r) => (
              <Card key={r.name[0]}>
                <CardTop><Stars n={r.n} /><CardDate><Fit w={106}>Mar 26th, 25</Fit></CardDate></CardTop>
                <CardUser><Avatar /><UserName><Fit w={r.name[1]}>{r.name[0]}</Fit></UserName></CardUser>
                <CardTitle>{r.title.map(([t, w]) => <Fit key={t} w={w}>{t}</Fit>)}</CardTitle>
                <CardText>{r.text.map(([t, w]) => <Fit key={t} w={w}>{t}</Fit>)}</CardText>
              </Card>
            ))}
          </Reviews>
          <MoreButton />
        </Page>
        <ScrollTrack>
          <svg width="13" height="10" viewBox="0 0 13 10"><path d="M6.500 1L12 8.500H1z" fill="#8b8b8b" stroke="#8b8b8b" strokeWidth="1.500" strokeLinejoin="round" /></svg>
          <ScrollThumb />
          <svg width="13" height="10" viewBox="0 0 13 10"><path d="M6.500 9L12 1.500H1z" fill="#8b8b8b" stroke="#8b8b8b" strokeWidth="1.500" strokeLinejoin="round" /></svg>
        </ScrollTrack>
      </Viewport>

      <Taskbar>
        <WinLogo />
        <SearchBox>
          <svg width="19" height="19" viewBox="0 0 19 19"><circle cx="8" cy="7.800" r="6.600" fill="none" stroke="#222" strokeWidth="1.900" /><path d="M12.700 12.700l5.300 5.300" stroke="#222" strokeWidth="2.300" /></svg>
          <Fit w={52}>Search</Fit>
        </SearchBox>
        <AppSlot><Copilot /></AppSlot>
        <AppSlot><RemotePC /></AppSlot>
        <AppSlot><Folder /><Running /></AppSlot>
        <AppSlot><Excel /></AppSlot>
        <AppSlot><Edge /></AppSlot>
        <AppSlot><ActiveApp><Chrome /><AppBadge>M</AppBadge><Running $on /></ActiveApp></AppSlot>
        <AppSlot><ZoomTile>zoom</ZoomTile></AppSlot>
        <AppSlot><Teams /></AppSlot>
        <AppSlot><Postman /></AppSlot>
        <AppSlot><Scanner /></AppSlot>
        <AppSlot><Calc /></AppSlot>
        <AppSlot><PowerBI /></AppSlot>
        <AppSlot><VsCode /><Running /></AppSlot>
        <AppSlot><Photos /><Running /></AppSlot>
        <Tray>
          <TrayItem $ml={0}><svg width="15" height="9" viewBox="0 0 15 9"><path d="M1 8l6.500-6.500L14 8" fill="none" stroke="#fff" strokeWidth="1.800" /></svg></TrayItem>
          <TrayItem $ml={22}>
            <Cloud a="#8f9093" b="#dcdcdc"><circle cx="14.500" cy="12" r="5.500" fill="#fff" /><path d="M11 12a3.500 3.500 0 016-2.400M18 12a3.500 3.500 0 01-6 2.400M17.400 7.500v2.400H15M11.600 16.500v-2.400H14" fill="none" stroke="#0f6cbd" strokeWidth="1.200" /></Cloud>
          </TrayItem>
          <TrayItem $ml={20}>
            <Cloud a="#0f6cbd" b="#1b9de2"><circle cx="14.500" cy="12" r="5.500" fill="#777" /><path d="M13 9.500v5M16 9.500v5" stroke="#fff" strokeWidth="1.200" /></Cloud>
          </TrayItem>
          <TrayText $ml={23} $align="center"><Fit w={28}>ENG</Fit><Fit w={30}>INTL</Fit></TrayText>
          <TrayItem $ml={22}><svg width="20" height="16" viewBox="0 0 20 16" fill="none" stroke="#fff" strokeWidth="1.500"><path d="M.8 5.600a13 13 0 0118.400 0M3.600 8.600a9 9 0 0112.800 0M6.400 11.400a5 5 0 017.200 0" /><circle cx="10" cy="13.800" r="1.300" fill="#fff" /></svg></TrayItem>
          <TrayItem $ml={10}><svg width="20" height="17" viewBox="0 0 20 17" fill="none" stroke="#fff" strokeWidth="1.400"><path d="M1 6v5h3l4.500 4V2L4 6zM11 6c1.200 1.500 1.200 3.500 0 5M13.500 3.500c2.800 3 2.800 7 0 10" /><path d="M16 1.500c4 4 4 10 0 14" stroke="#666a66" /></svg></TrayItem>
          <TrayItem $ml={10}><svg width="20" height="14" viewBox="0 0 20 14"><rect x=".8" y=".8" width="16.400" height="12.400" rx="3" fill="none" stroke="#fff" strokeWidth="1.300" /><rect x="2.800" y="2.800" width="12.400" height="8.400" rx="1" fill="#fff" /><path d="M18.500 5v4" stroke="#fff" strokeWidth="2" /></svg></TrayItem>
          <Spring />
          <TrayText $ml={0} $align="flex-end"><Fit w={36}>17:44</Fit><Fit w={77}>28/05/2025</Fit></TrayText>
        </Tray>
      </Taskbar>
    </Screen>
  );
}
